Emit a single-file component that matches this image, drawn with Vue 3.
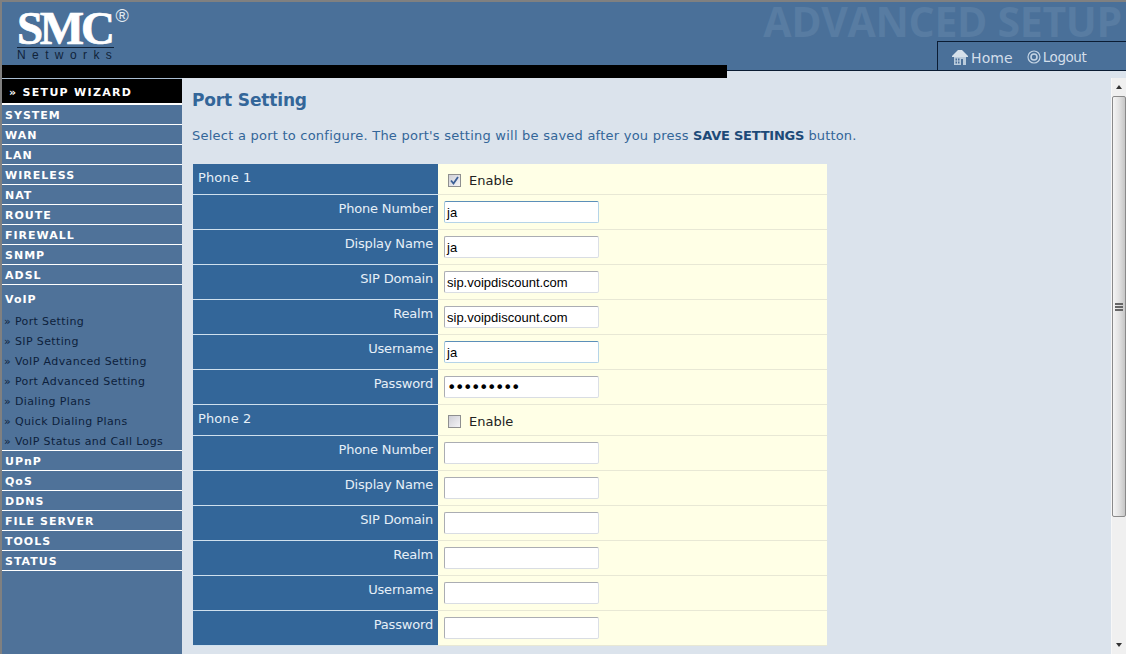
<script setup>
const before = ['SYSTEM','WAN','LAN','WIRELESS','NAT','ROUTE','FIREWALL','SNMP','ADSL']
const subs = ['Port Setting','SIP Setting','VoIP Advanced Setting','Port Advanced Setting','Dialing Plans','Quick Dialing Plans','VoIP Status and Call Logs']
const after = ['UPnP','QoS','DDNS','FILE SERVER','TOOLS','STATUS']
const phones = [
  { name:'Phone 1', on:true, rows:[['Phone Number','ja','text',true],['Display Name','ja','text',false],['SIP Domain','sip.voipdiscount.com','text',false],['Realm','sip.voipdiscount.com','text',false],['Username','ja','text',true],['Password','•••••••••','pw',false]] },
  { name:'Phone 2', on:false, rows:[['Phone Number','','text',false],['Display Name','','text',false],['SIP Domain','','text',false],['Realm','','text',false],['Username','','text',false],['Password','','text',false]] },
]
</script>

<template>
  <div class="page">
    <header class="head">
      <div class="logo">
        <div class="smc"><span class="smc-t">SMC</span><span class="reg">®</span></div>
        <div class="net">Networks</div>
      </div>
      <div class="head-right">
        <div class="title">ADVANCED SETUP</div>
        <div class="tab">
          <svg class="ic-home" viewBox="0 0 16 15" width="16" height="15">
            <path d="M6 0 L10 0 L16 6 L16 7 L0 7 L0 6 Z" fill="#d5e0ea"/>
            <path d="M2 7H14V15H11V9H9V15H2Z" fill="#b9cbdc"/>
            <path d="M3.500 8.500h1.500v2H3.500zM6 8.500h1.500v2H6zM3.500 11.500h1.500v2H3.500zM6 11.500h1.500v2H6z" fill="#4a6f99"/>
          </svg>
          <span class="t-home">Home</span>
          <svg class="ic-out" viewBox="0 0 14 14" width="14" height="14">
            <circle cx="7" cy="7" r="6" fill="none" stroke="#c4d4e4" stroke-width="1.200"/>
            <circle cx="7" cy="7" r="3" fill="none" stroke="#c4d4e4" stroke-width="1.600"/>
          </svg>
          <span class="t-out">Logout</span>
        </div>
      </div>
      <div class="blackbar"></div>
    </header>
    <div class="body">
      <nav class="side">
        <div class="wizard">» SETUP WIZARD</div>
        <div v-for="i in before" :key="i" class="item">{{ i }}</div>
        <div class="voip">
          <div class="voip-t">VoIP</div>
          <div v-for="s in subs" :key="s" class="sub">» {{ s }}</div>
        </div>
        <div v-for="i in after" :key="i" class="item">{{ i }}</div>
      </nav>
      <main class="main">
        <h1>Port Setting</h1>
        <p class="intro"><span class="norm">Select a port to configure. The port's setting will be saved after you press </span><b>SAVE SETTINGS</b><span class="tail"> button.</span></p>
        <div class="tbl">
          <template v-for="p in phones" :key="p.name">
            <div class="row hd">
              <div class="l left">{{ p.name }}</div>
              <div class="r"><span class="cb" :class="{on:p.on}"><svg v-if="p.on" viewBox="0 0 9 9" width="9" height="9"><path d="M1 4.500L3.500 7.500L8 1" fill="none" stroke="#3b5f96" stroke-width="1.800"/></svg></span><span class="en">Enable</span></div>
            </div>
            <div v-for="r in p.rows" :key="r[0]" class="row">
              <div class="l">{{ r[0] }}</div>
              <div class="r"><div class="inp" :class="{focus:r[3], pw:r[2]==='pw'}">{{ r[1] }}</div></div>
            </div>
          </template>
        </div>
      </main>
      <aside class="sb">
        <div class="arrow"><i class="up"></i></div>
        <div class="thumb"><span></span><span></span><span></span></div>
        <div class="track"></div>
        <div class="arrow"><i class="down"></i></div>
      </aside>
    </div>
  </div>
</template>

<style>
html, body { margin: 0; overflow: hidden; }
</style>

<style scoped>
.page { width: 1126px; height: 654px; overflow: hidden; display: flex; flex-direction: column; background: #808080; font-family: "DejaVu Sans", sans-serif; box-sizing: border-box; padding-top: 2px; }
.head { height: 69px; margin-left: 2px; box-sizing: border-box; background: #4a7099; border-bottom: 1px solid #0b1c33; position: relative; display: flex; justify-content: space-between; flex: none; }
.logo { margin: 7px 0 0 15px; width: 120px; color: #fff; }
.smc { display: flex; height: 38px; }
.smc-t { font-family: "Liberation Serif", serif; font-weight: 700; font-size: 47px; line-height: 38px; height: 38px; letter-spacing: -3.300px; -webkit-text-stroke: 0.700px #fff; }
.reg { font-family: "Liberation Sans", sans-serif; font-weight: 400; font-size: 18px; line-height: 17px; margin: -1px 0 0 4px; color: #e4ecf3; }
.net { width: 97px; border-top: 1px solid #10233a; font-family: "Liberation Sans", sans-serif; font-size: 12px; line-height: 13px; padding-top: 1px; letter-spacing: 6.400px; color: #10233a; white-space: nowrap; }
.head-right { display: flex; flex-direction: column; align-items: flex-end; }
.title { font-family: "Open Sans", sans-serif; font-weight: 700; font-size: 41px; line-height: 39px; height: 39px; color: #587ca2; white-space: nowrap; margin-right: 4px; letter-spacing: -0.300px; }
.tab { width: 189px; height: 29px; box-sizing: border-box; border-top: 1px solid #0b1c33; border-left: 1px solid #0b1c33; display: flex; align-items: center; padding-left: 14px; color: #d3deea; }
.ic-home { margin-right: 3px; margin-top: 2px; }
.t-home { font-size: 14px; letter-spacing: 0.100px; margin: 3px 14px 0 0; }
.ic-out { margin-right: 2px; margin-top: 1px; }
.t-out { font-size: 13.500px; letter-spacing: -0.450px; margin-top: 1px; }
.blackbar { position: absolute; left: 0; top: 63px; width: 725px; height: 13px; background: #000; }
.body { flex: 1; display: flex; margin-left: 2px; min-height: 0; background: #dbe3ec; }
.side { width: 180px; flex: none; margin-top: 7px; background: #4f7299; border-top: 1px solid #a9bdd2; box-sizing: border-box; }
.wizard { height: 26px; background: #000; color: #fff; font-weight: 700; font-size: 11px; letter-spacing: 1.300px; line-height: 27px; padding-left: 7px; border-bottom: 2px solid #fff; box-sizing: border-box; }
.item { height: 20px; box-sizing: border-box; border-bottom: 1px solid #fff; color: #fff; font-weight: 700; font-size: 11px; letter-spacing: 1px; line-height: 21px; padding-left: 3px; }
.voip { height: 166px; box-sizing: border-box; border-bottom: 1px solid #fff; padding-top: 6px; }
.voip-t { color: #fff; font-weight: 700; font-size: 11px; letter-spacing: 1px; line-height: 18px; padding-left: 3px; margin-bottom: 3px; }
.sub { height: 20px; line-height: 20px; font-size: 11px; letter-spacing: 0.370px; color: #0d1f3c; padding-left: 2px; white-space: nowrap; }
.main { flex: 1; min-width: 0; padding: 7px 0 0 10px; overflow: hidden; color: #2f6397; border-left: 1px solid #dbe3ec; }
h1 { margin: 12px 0 0 -1px; font-size: 17px; line-height: 20px; font-weight: 700; color: #336699; letter-spacing: -0.150px; }
.intro { margin: 18px 0 0 -1px; font-size: 13px; line-height: 16px; color: #336699; white-space: nowrap; }
.norm { letter-spacing: 0.235px; }
.tail { letter-spacing: 0.150px; }
.intro b { color: #1d4a78; letter-spacing: -0.230px; }
.tbl { margin-top: 20px; width: 634px; }
.row { display: flex; height: 35px; }
.row.hd { height: 31px; }
.l { width: 245px; box-sizing: border-box; background: #336699; border-bottom: 1px solid #cfe0ee; color: #e6eff7; font-size: 13px; line-height: 16px; text-align: right; padding: 6px 5px 0 5px; flex: none; letter-spacing: -0.180px; }
.l.left { text-align: left; letter-spacing: 0.100px; }
.r { flex: 1; background: #ffffe6; border-bottom: 1px solid #e8e8d5; padding: 6px 0 0 6px; box-sizing: border-box; display: flex; align-items: flex-start; }
.hd .r { padding: 9px 0 0 10px; }
.cb { width: 11px; height: 11px; margin-top: 1px; border: 1px solid #8e8f8f; background: linear-gradient(135deg, #cfcfd6, #f4f4f6); display: flex; align-items: center; justify-content: center; }
.en { margin-left: 8px; font-size: 13px; line-height: 16px; color: #222; }
.inp { width: 155px; height: 22px; box-sizing: border-box; border: 1px solid #abadb3; border-right-color: #dbdfe6; border-bottom-color: #d9dde3; border-radius: 2px; background: #fff; font-family: "Liberation Sans", sans-serif; font-size: 13px; line-height: 21px; padding-left: 2px; color: #000; white-space: nowrap; }
.inp.focus { border-color: #5b8fb9 #b5d4e8 #b5d4e8 #a5c8dd; }
.inp.pw { font-family: "DejaVu Sans", sans-serif; font-size: 16px; letter-spacing: -1.450px; }
.sb { width: 15px; flex: none; margin-top: 7px; display: flex; flex-direction: column; background: #f0f0f0; border-left: 1px solid #f7f7f7; box-sizing: border-box; }
.arrow { height: 18px; background: #f0f0f0; display: flex; align-items: center; justify-content: center; flex: none; }
.up { border-left: 3px solid transparent; border-right: 3px solid transparent; border-bottom: 4px solid #333; }
.down { border-left: 3px solid transparent; border-right: 3px solid transparent; border-top: 4px solid #333; }
.thumb { height: 421px; flex: none; box-sizing: border-box; border: 1px solid #8a8a8a; border-radius: 2px; background: linear-gradient(90deg, #f5f5f5, #e2e2e2 50%, #c6c6c6); display: flex; flex-direction: column; align-items: center; justify-content: center; gap: 1px; }
.thumb span { width: 8px; height: 2px; background: #666; }
.track { flex: 1; }
</style>
